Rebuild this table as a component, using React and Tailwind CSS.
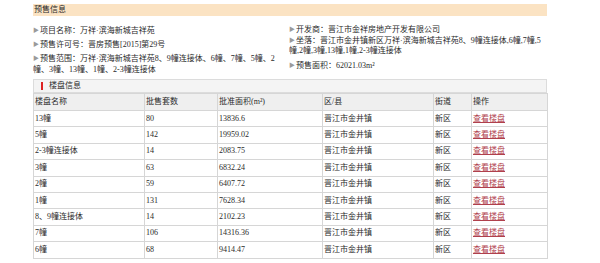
const rows = [
  ['13幢', '80', '13836.6'],
  ['5幢', '142', '19959.02'],
  ['2-3幢连接体', '14', '2083.75'],
  ['3幢', '63', '6832.24'],
  ['2幢', '59', '6407.72'],
  ['1幢', '131', '7628.34'],
  ['8、9幢连接体', '14', '2102.23'],
  ['7幢', '106', '14316.36'],
  ['6幢', '68', '9414.47'],
]

function Dot() {
  return <span className="text-[#9a9a9a] text-[6px] mr-[1px] align-[1px]">▶</span>
}

export default function App() {
  return (
    <div className="w-[600px] h-[263px] bg-white overflow-hidden font-['Liberation_Serif','Noto_Sans_CJK_SC',serif] text-[#2a2a2a]">
      <div className="ml-[33px] w-[514px] pt-[4px]">
        <div className="h-[12px] bg-[#fbe3c3] text-[8px] leading-[12px] pl-[1px]">预售信息</div>

        <div className="flex text-[8px]">
          <div className="w-[256px] pt-[9px]">
            <div className="leading-[11px]"><Dot />项目名称：万祥·滨海新城吉祥苑</div>
            <div className="leading-[11px] mt-[3px]"><Dot />预售许可号：晋房预售[2015]第29号</div>
            <div className="leading-[11px] mt-[3px]">
              <Dot />预售范围：万祥·滨海新城吉祥苑8、9幢连接体、6幢、7幢、5幢、2<br />幢、3幢、13幢、1幢、2-3幢连接体
            </div>
          </div>
          <div className="flex-1 pt-[8px] whitespace-nowrap">
            <div className="leading-[10px]"><Dot />开发商：晋江市金祥房地产开发有限公司</div>
            <div className="leading-[10px]">
              <Dot />坐落：晋江市金井镇新区万祥·滨海新城吉祥苑8、9幢连接体,6幢,7幢,5<br />幢,2幢,3幢,13幢,1幢,2-3幢连接体
            </div>
            <div className="leading-[10px] mt-[4px]"><Dot />预售面积：62021.03m²</div>
          </div>
        </div>

        <div className="mt-[4px] h-[14px] bg-[#f4f4f4] border border-[#dcdcdc] flex items-center text-[8px]">
          <span className="ml-[7px] w-[2px] h-[8px] bg-[#d22]" />
          <span className="ml-[6px]">楼盘信息</span>
        </div>

        <table className="w-[514px] border-collapse text-[8px] table-fixed">
          <colgroup>
            <col className="w-[111px]" />
            <col className="w-[73px]" />
            <col className="w-[105px]" />
            <col className="w-[111px]" />
            <col className="w-[38px]" />
            <col className="w-[76px]" />
          </colgroup>
          <thead>
            <tr className="h-[17px] bg-[#efefef]">
              {['楼盘名称', '批售套数', '批准面积(m²)', '区/县', '街道', '操作'].map((h) => (
                <th key={h} className="border border-[#d6d6d6] font-normal text-left pl-[1px] leading-[10px]">{h}</th>
              ))}
            </tr>
          </thead>
          <tbody>
            {rows.map((r) => (
              <tr key={r[0]} className="h-[16.4px]">
                <td className="border border-[#d6d6d6] pl-[1px] leading-[10px]">{r[0]}</td>
                <td className="border border-[#d6d6d6] pl-[1px] leading-[10px]">{r[1]}</td>
                <td className="border border-[#d6d6d6] pl-[1px] leading-[10px]">{r[2]}</td>
                <td className="border border-[#d6d6d6] pl-[1px] leading-[10px]">晋江市金井镇</td>
                <td className="border border-[#d6d6d6] pl-[1px] leading-[10px]">新区</td>
                <td className="border border-[#d6d6d6] pl-[1px] leading-[10px]">
                  <a href="#" className="text-[#b0404c] underline">查看楼盘</a>
                </td>
              </tr>
            ))}
          </tbody>
        </table>
      </div>
    </div>
  )
}
